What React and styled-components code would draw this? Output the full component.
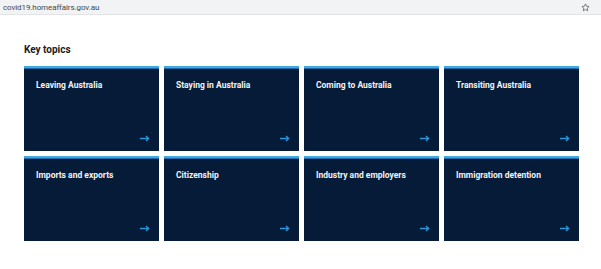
import React from "react";
import styled, { createGlobalStyle } from "styled-components";

const Global = createGlobalStyle`
  html, body { margin: 0; padding: 0; background: #ffffff; }
  body { font-family: Roboto, "Liberation Sans", Arial, sans-serif; }
`;

const Page = styled.div`
  width: 601px;
  height: 269px;
  overflow: hidden;
  background: #fff;
`;

const AddressBar = styled.div`
  height: 14px;
  background: #f1f3f4;
  border-bottom: 1px solid #e2e4e6;
  display: flex;
  align-items: center;
  justify-content: space-between;
  padding: 0 11px 0 3px;
`;

const Url = styled.span`
  font-family: Roboto, "Liberation Sans", sans-serif;
  font-size: 8px;
  color: #45484c;
  letter-spacing: -0.1px;
`;

const Star = styled.svg`
  width: 9px;
  height: 9px;
  display: block;
`;

const Content = styled.main`
  padding: 29px 22px 0 24px;
`;

const Heading = styled.h2`
  margin: 0 0 10px 0;
  font-family: Roboto, "Liberation Sans", sans-serif;
  font-size: 10px;
  font-weight: 700;
  line-height: 12px;
  color: #1a1a1a;
`;

const Grid = styled.div`
  display: grid;
  grid-template-columns: repeat(4, 135px);
  grid-auto-rows: 85px;
  column-gap: 5px;
  row-gap: 5px;
`;

const Card = styled.a`
  display: flex;
  flex-direction: column;
  justify-content: space-between;
  background: #051b38;
  border-top: 2px solid #3fa9e2;
  box-shadow: inset 0 1px 0 #1f6aa8;
  padding: 12px 9px 9px 12px;
  text-decoration: none;
  box-sizing: border-box;
`;

const Title = styled.span`
  font-family: Roboto, "Liberation Sans", sans-serif;
  font-size: 8.5px;
  font-weight: 700;
  color: #f2f4f7;
  line-height: 10px;
`;

const Arrow = styled.svg`
  align-self: flex-end;
  width: 10px;
  height: 7px;
  display: block;
`;

const topics = [
  "Leaving Australia",
  "Staying in Australia",
  "Coming to Australia",
  "Transiting Australia",
  "Imports and exports",
  "Citizenship",
  "Industry and employers",
  "Immigration detention",
];

export default function App() {
  return (
    <Page>
      <Global />
      <AddressBar>
        <Url>covid19.homeaffairs.gov.au</Url>
        <Star viewBox="0 0 24 24" fill="none" stroke="#5f6368" strokeWidth="2.2" strokeLinejoin="round">
          <path d="M12 2.5l2.9 6.1 6.6.8-4.9 4.6 1.3 6.6L12 17.3l-5.9 3.3 1.3-6.6-4.9-4.6 6.6-.8z" />
        </Star>
      </AddressBar>
      <Content>
        <Heading>Key topics</Heading>
        <Grid>
          {topics.map((t) => (
            <Card key={t} href="#">
              <Title>{t}</Title>
              <Arrow viewBox="0 0 10 7" fill="none" stroke="#2f93d6" strokeWidth="1.3">
                <path d="M0 3.5h8.5M6 1l2.7 2.5L6 6" />
              </Arrow>
            </Card>
          ))}
        </Grid>
      </Content>
    </Page>
  );
}
